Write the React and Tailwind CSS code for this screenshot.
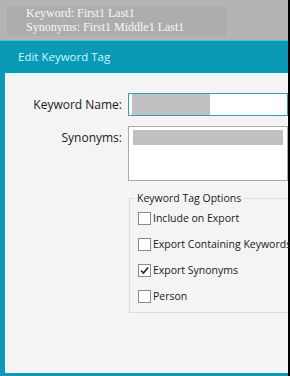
import React from 'react';

const options = [
  { label: 'Include on Export', checked: false },
  { label: 'Export Containing Keywords', checked: false },
  { label: 'Export Synonyms', checked: true },
  { label: 'Person', checked: false },
];

function CheckBox({ checked }) {
  return (
    <span className="w-[13px] h-[13px] shrink-0 border border-[#8a8a8a] bg-white flex items-center justify-center">
      {checked && (
        <svg width="9" height="9" viewBox="0 0 9 9">
          <path d="M1 4.5 L3.5 7 L8 1.5" fill="none" stroke="#222" strokeWidth="1.6" />
        </svg>
      )}
    </span>
  );
}

export default function App() {
  return (
    <div className="w-[290px] h-[376px] overflow-hidden flex bg-[#b4b4b4]">
      <div className="flex-1 flex flex-col min-w-0">
        {/* preview tooltip */}
        <div className="h-[40px] pt-[7px] pl-[7px]">
          <div className="w-[219px] h-[29px] bg-[#adadad] pl-[19px] text-[#f7f7f7] text-[12px] leading-[13.5px] font-['Liberation_Serif',serif]">
            <div>Keyword: First1 Last1</div>
            <div>Synonyms: First1 Middle1 Last1</div>
          </div>
        </div>

        {/* dialog */}
        <div className="flex-1 flex flex-col bg-[#0a9ab8] border-t border-[#40c4d4]">
          <div className="h-[32px] pl-[18px] flex items-center text-[11.5px] text-[#c9fbff] font-['Open_Sans',sans-serif]">
            Edit Keyword Tag
          </div>
          <div className="flex-1 ml-[5px] mb-[3px] bg-[#f4f4f4] border-t-2 border-[#d8fbff] pt-[18px] font-['Open_Sans',sans-serif] text-[12px] text-[#1a1a1a]">
            <div className="flex items-center h-[23px]">
              <div className="w-[118px] text-right pr-[1px]">Keyword Name:</div>
              <div className="ml-[5px] flex-1 h-[23px] border border-[#3a9fa8] bg-white pl-[3px] flex">
                <div className="w-[78px] h-full bg-[#c1bfbf]" />
              </div>
            </div>
            <div className="flex items-start mt-[10px]">
              <div className="w-[118px] text-right pr-[1px] pt-[3px]">Synonyms:</div>
              <div className="ml-[5px] flex-1 h-[55px] border border-[#acacac] bg-white pl-[4px] pt-[3px]">
                <div className="w-[150px] h-[15px] bg-[#c1bfbf]" />
              </div>
            </div>
            <div className="ml-[124px] mt-[17px] relative border border-r-0 border-[#dcdcdc] h-[115px] pt-[13px] pl-[8px]">
              <div className="absolute -top-[9px] left-[4px] px-[3px] bg-[#f4f4f4] leading-[16px] text-[10.5px]">Keyword Tag Options</div>
              <div className="flex flex-col gap-[13px] text-[10.5px] whitespace-nowrap">
                {options.map((o) => (
                  <div key={o.label} className="flex items-center gap-[2px] h-[13px]">
                    <CheckBox checked={o.checked} />
                    <span className="leading-[13px]">{o.label}</span>
                  </div>
                ))}
              </div>
            </div>
          </div>
        </div>
      </div>
      <div className="w-[2px] shrink-0 bg-black" />
    </div>
  );
}
